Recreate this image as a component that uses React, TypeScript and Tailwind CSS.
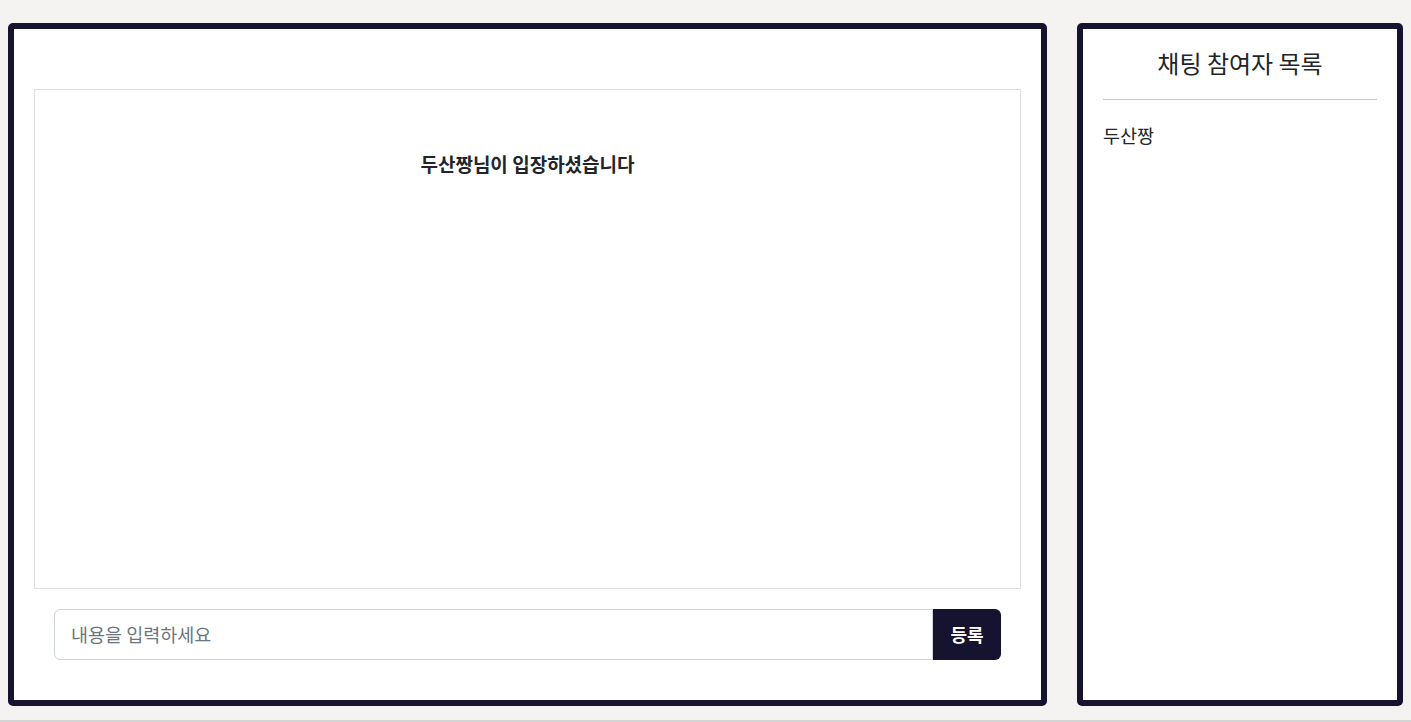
export default function App() {
  return (
    <div
      className="h-[722px] bg-[#f4f3f1] flex flex-col overflow-hidden"
      style={{ fontFamily: '"Noto Sans CJK KR", "Noto Sans", sans-serif' }}
    >
      <div className="flex gap-[30px] px-[8px] pt-[23px] h-[720px]">
        {/* chat area */}
        <div className="flex-1 h-[683px] bg-white border-[6px] border-[#15132f] rounded-[5px] pt-[60px] px-[20px] flex flex-col">
          <div className="h-[500px] border border-[#dedede] flex flex-col items-center pt-[60px]">
            <p className="text-[19px] font-bold text-[#212529] leading-[28px]">두산짱님이 입장하셨습니다</p>
          </div>
          <div className="mx-[20px] mt-[20px] flex h-[51px]">
            <input
              placeholder="내용을 입력하세요"
              className="flex-1 border border-[#ced4da] rounded-l-[6px] px-[16px] text-[18.5px] text-[#212529] placeholder:text-[#6c757d] outline-none"
            />
            <button className="w-[68px] bg-[#15132f] text-white text-[18px] font-bold rounded-r-[6px]">
              등록
            </button>
          </div>
        </div>

        {/* participants */}
        <div className="w-[326px] h-[683px] bg-white border-[6px] border-[#15132f] rounded-[5px] px-[20px] pt-[16px]">
          <h4 className="text-[24px] text-[#212529] text-center leading-[36px]">채팅 참여자 목록</h4>
          <hr className="mt-[18px] border-t border-[#c8c8c8]" />
          <ul className="mt-[22px]">
            <li className="text-[18.5px] text-[#212529] leading-[27px]">두산짱</li>
          </ul>
        </div>
      </div>
      <div className="h-[2px] bg-[#d4d4d4]" />
    </div>
  );
}
